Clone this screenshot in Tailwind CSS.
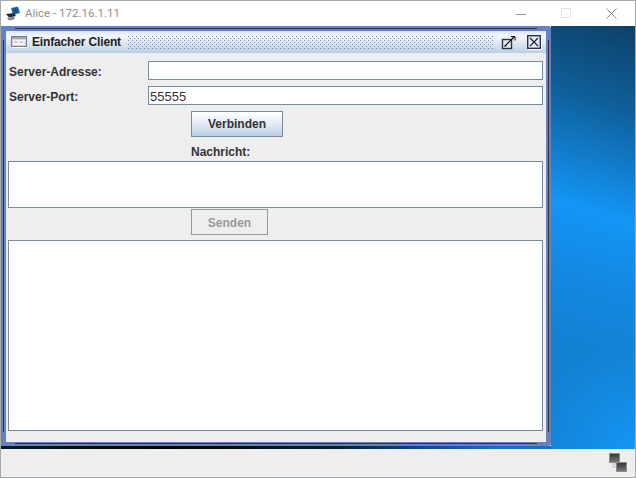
<!DOCTYPE html>
<html lang="de">
<head>
  <meta charset="UTF-8" />
  <title>Alice - 172.16.1.11</title>
  <script src="https://cdn.jsdelivr.net/npm/@tailwindcss/browser@4"></script>
</head>
<body class="w-[636px] h-[478px] overflow-hidden bg-[#eeeeee] font-['Liberation_Sans',Arial,sans-serif]">
  <div class="w-full h-full flex flex-col border-x border-t border-[#a9a9a9]">

    <!-- Fenstertitel -->
    <div class="h-[25px] shrink-0 bg-white flex items-center relative">
      <svg class="ml-[4px] w-[16px] h-[16px]" viewBox="0 0 16 16">
        <path d="M6 2 L13 0.500 L15 7 L8 9 Z" fill="#1b6db4"/>
        <path d="M7.500 3 L12 2 L13 6 L9 7 Z" fill="#14538c"/>
        <path d="M1 8 L9 7 L11 10 L4 11.500 Z" fill="#1f2c3e"/>
        <path d="M2 12 L10 10.500 L9 13.500 L4 14.500 Z" fill="#7f858d"/>
      </svg>
      <span class="ml-[4px] text-[11.5px] text-[#8f8f8f] font-['Roboto',sans-serif]">Alice - 172.16.1.11</span>
      <div class="absolute top-0 left-[515px] w-[10px] h-[25px] flex items-center">
        <div class="w-[10px] h-px bg-[#9a9a9a] mt-[1px]"></div>
      </div>
      <div class="absolute top-[7px] left-[560px] w-[10px] h-[10px] border border-[#e3e3e3]"></div>
      <svg class="absolute top-[7px] left-[605px] w-[11px] h-[11px]" viewBox="0 0 11 11">
        <path d="M0.500 0.500 L10.500 10.500 M10.500 0.500 L0.500 10.500" stroke="#8c8c8c" stroke-width="1" fill="none"/>
      </svg>
    </div>

    <!-- Desktop -->
    <div class="flex-1 relative bg-[radial-gradient(circle_at_100%_100%,#1495f5_0,transparent_110px),linear-gradient(197deg,#0d4169_0%,#0f5f99_14%,#1495f5_32%,#1388e2_44%,#1280d0_56%,#1280d0_100%)]">
      <div class="absolute left-0 right-[84px] bottom-0 h-[3px] bg-[linear-gradient(90deg,#03192c,#000_30%,#02223a_62%,#0f75c0_90%)]"></div>

      <!-- Internes Fenster -->
      <div class="absolute left-0 top-0 w-[550px] h-[420px] bg-[#6382bf] rounded-tl-[4px] pl-[5px] pt-[5px] pr-[5px] pb-[4px]">
        <div class="absolute left-[14px] right-[14px] top-[2px] h-px bg-[#2c3444]"></div>
        <div class="absolute left-[14px] right-[14px] bottom-[2px] h-px bg-[#2c3444]"></div>
        <div class="absolute top-[14px] bottom-[14px] left-[2px] w-px bg-[#2c3444]"></div>
        <div class="absolute top-[14px] bottom-[14px] right-[2px] w-px bg-[#2c3444]"></div>
        <div class="absolute top-0 right-0 w-px h-px bg-white"></div>
        <div class="absolute bottom-0 right-0 w-px h-px bg-white"></div>

        <div class="h-full flex flex-col bg-[#eeeeee]">
          <div class="h-[22px] shrink-0 flex items-center bg-[linear-gradient(180deg,#dfe8f4_0%,#f4f7fb_25%,#dbe5f1_60%,#bccfe5_100%)]">
            <svg class="ml-[5px] w-[16px] h-[14px] shrink-0" viewBox="0 0 16 14">
              <rect x="0.500" y="1.500" width="15" height="10" fill="#d5d9df" stroke="#777d86"/>
              <rect x="1" y="2" width="14" height="2" fill="#9aa8bd"/>
              <rect x="2" y="5" width="12" height="5" fill="#f4f4f4"/>
              <path d="M3 7 H7 M9 7 H12" stroke="#a5abb3"/>
              <path d="M1 12.500 H16" stroke="#ffffff"/>
            </svg>
            <span class="ml-[5px] w-[90px] text-[12px] leading-[14px] font-bold text-[#222222] tracking-[-0.15px] whitespace-nowrap">Einfacher Client</span>
            <div class="ml-[5px] w-[367px] h-[14px] bg-[radial-gradient(circle_at_1.5px_1.5px,#6f84a0_0.6px,transparent_0.7px),radial-gradient(circle_at_3.5px_3.5px,#6f84a0_0.6px,transparent_0.7px)] bg-[length:4px_4px]"></div>
            <svg class="ml-[7px] w-[16px] h-[16px] shrink-0" viewBox="0 0 16 16">
              <rect x="1.500" y="5.500" width="9" height="9" fill="#e8eef6" stroke="#26344c" stroke-width="1.400"/>
              <path d="M3.500 12.500 L13 3" stroke="#000" stroke-width="1.200"/>
              <path d="M10 2.500 H14 V6.500" fill="none" stroke="#000"/>
            </svg>
            <svg class="ml-[10px] w-[15px] h-[15px] shrink-0" viewBox="0 0 15 15">
              <rect x="1" y="1" width="14" height="14" fill="#ffffff"/>
              <rect x="0.700" y="0.700" width="12.600" height="12.600" fill="#e6ecf5" stroke="#25324a" stroke-width="1.400"/>
              <path d="M3 3 L11 11 M11 3 L3 11" stroke="#1a2433" stroke-width="1.200"/>
            </svg>
          </div>

          <!-- Formular -->
          <div class="flex-1 flex flex-col pl-[2px] pr-[3px] pt-[8px] pb-[10px]">
            <div class="flex items-center h-[19px]">
              <span class="pl-[1px] pt-[2px] w-[140px] text-[12px] font-bold text-[#333333]">Server-Adresse:</span>
              <div class="flex-1 h-full bg-white border border-[#7a8a99]"></div>
            </div>
            <div class="flex items-center h-[19px] mt-[6px]">
              <span class="pl-[1px] pt-[2px] w-[140px] text-[12px] font-bold text-[#333333]">Server-Port:</span>
              <div class="flex-1 h-full bg-white border border-[#7a8a99] pl-[1px] text-[13px] leading-[19px] text-[#333333]">55555</div>
            </div>
            <div class="ml-[183px] mt-[6px] w-[92px] h-[26px] flex items-center justify-center border border-[#7a8a99] bg-[linear-gradient(180deg,#ffffff_0%,#e6eef6_45%,#b8cfe5_100%)] text-[12px] font-bold text-[#333333]">Verbinden</div>
            <div class="ml-[183px] mt-[8px] h-[14px] leading-[14px] text-[12px] font-bold text-[#333333]">Nachricht:</div>
            <div class="mt-[2px] h-[47px] bg-white border border-[#7a8a99]"></div>
            <div class="ml-[183px] mt-[1px] w-[77px] h-[26px] pt-[1px] flex items-center justify-center border border-[#999999] text-[12px] font-bold text-[#999999]">Senden</div>
            <div class="mt-[5px] h-[191px] bg-white border border-[#7a8a99]"></div>
          </div>
        </div>
      </div>
    </div>

    <!-- Statusleiste -->
    <div class="h-[29px] shrink-0 bg-[#eeeeee] relative border-b border-[#a9a9a9]">
      <svg class="absolute left-[608px] top-[4px] w-[18px] h-[19px]" viewBox="0 0 18 19">
        <defs>
          <linearGradient id="kachel" x1="0" y1="0" x2="0" y2="1">
            <stop offset="0" stop-color="#333333"/>
            <stop offset="1" stop-color="#7a7a7a"/>
          </linearGradient>
        </defs>
        <path d="M4 10 V14 H8 M6.500 10 V12" fill="none" stroke="#bdbdbd" stroke-width="1"/>
        <rect x="0.500" y="0.500" width="10" height="9" fill="url(#kachel)" stroke="#8f8f8f"/>
        <rect x="7.500" y="9.500" width="10" height="9" fill="url(#kachel)" stroke="#8f8f8f"/>
      </svg>
    </div>
  </div>
</body>
</html>
